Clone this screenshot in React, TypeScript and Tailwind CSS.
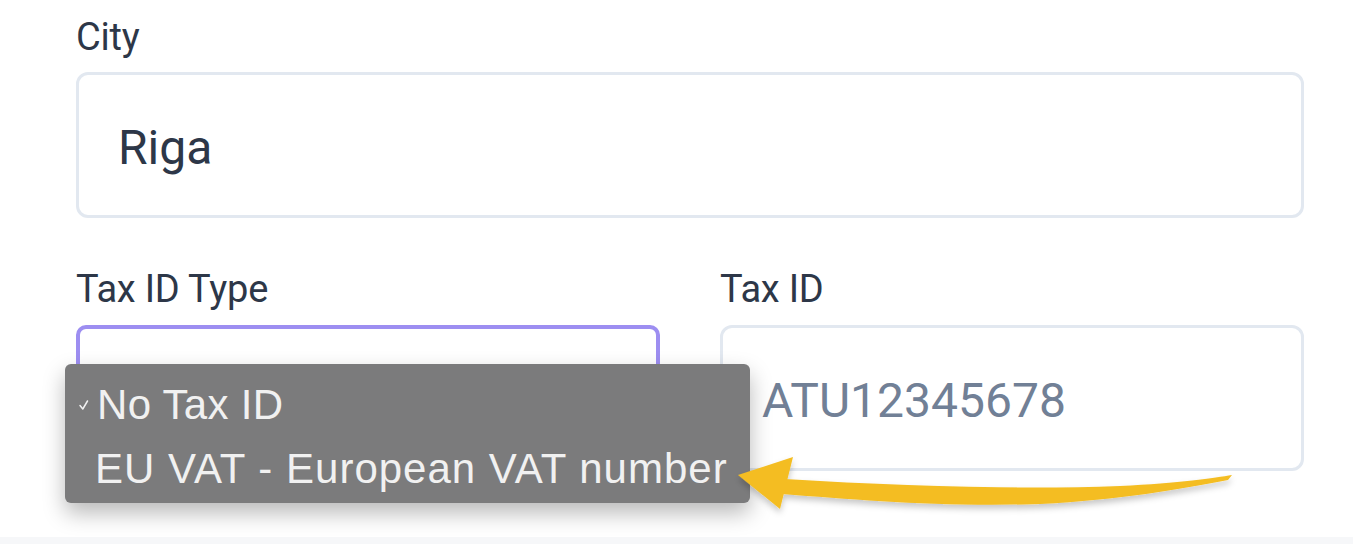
import React from 'react'

const labelCls = "block text-[38px] leading-[44px] text-[#2d3748] font-['Roboto',sans-serif] tracking-[-0.2px]"

const App = () => {
    return (
        <div className="relative w-[1353px] h-[544px] bg-white overflow-hidden flex flex-col">
            <div className="h-[537px] pl-[76px] pr-[49px] pt-[15px]">
                <label className={labelCls}>City</label>
                <div className="mt-[13px] h-[146px] rounded-xl border-[3px] border-[#e2e8f0] flex items-center pl-[39px] pt-[6px]">
                    <span className="text-[48px] text-[#2d3748] font-['Roboto',sans-serif]">Riga</span>
                </div>

                <div className="mt-[49px] grid grid-cols-2 gap-[60px]">
                    <div className="relative">
                        <label className={labelCls}>Tax ID Type</label>
                        <div className="mt-[14px] h-[146px] rounded-[10px] border-4 border-[#9d8ef1] bg-white"></div>

                        <div className="absolute left-[-11px] top-[97px] w-[685px] h-[139px] rounded-md bg-[#7b7b7c] pt-[9px] shadow-[0_10px_22px_rgba(0,0,0,0.28)] font-['Liberation_Sans',sans-serif] text-[#f1f1f1] text-[42px]">
                            <div className="h-[64px] leading-[64px] flex items-center">
                                <svg className="w-[32px] h-[14px] mt-[0px]" viewBox="0 0 32 14">
                                    <path d="M15 7.5 L17.8 11 L22.5 3" fill="none" stroke="#f1f1f1" strokeWidth="1.5" strokeLinecap="round" strokeLinejoin="round" />
                                </svg>
                                <span className="tracking-[0.3px]">No Tax ID</span>
                            </div>
                            <div className="h-[64px] leading-[64px] pl-[30px] tracking-[1px]">EU VAT - European VAT number</div>
                        </div>
                    </div>
                    <div>
                        <label className={labelCls}>Tax ID</label>
                        <div className="mt-[14px] h-[146px] rounded-xl border-[3px] border-[#e2e8f0] flex items-center pl-[39px] pt-[6px]">
                            <span className="text-[48px] text-[#718096] font-['Roboto',sans-serif]">ATU12345678</span>
                        </div>
                    </div>
                </div>
            </div>
            <div className="flex-1 bg-[#f6f7f9]"></div>

            {/* annotation arrow */}
            <svg className="absolute left-[700px] top-[440px] w-[560px] h-[90px] pointer-events-none" viewBox="0 0 560 90">
                <defs>
                    <filter id="sh" x="-10%" y="-30%" width="120%" height="160%">
                        <feDropShadow dx="0" dy="4" stdDeviation="3" floodColor="#000" floodOpacity="0.22" />
                    </filter>
                </defs>
                <g filter="url(#sh)" fill="#f4bd22">
                    <path d="M85 39 C 200 46, 320 50, 420 46 C 480 43, 515 38, 532 35 L 528 40 C 480 49, 420 60, 340 64 C 240 67, 160 60, 82 54 Z" />
                    <path d="M38 35 L 93 17 L 80 69 Z" />
                </g>
            </svg>
        </div>
    )
}

export default App
